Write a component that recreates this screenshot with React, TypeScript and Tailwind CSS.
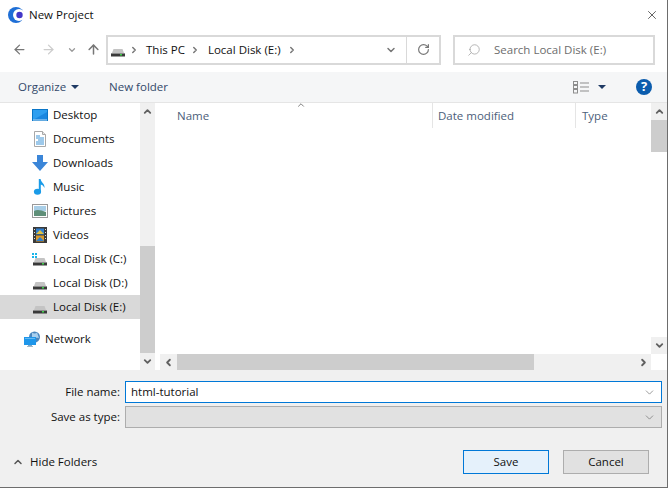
import { ArrowLeft, ArrowRight, ArrowUp, ChevronDown, ChevronLeft, ChevronRight, ChevronUp, RotateCw, Search, X } from "lucide-react";

const font = "font-['Open_Sans','Liberation_Sans',sans-serif]";

function HardDrive({ windows }: { windows?: boolean }) {
  return (
    <svg width="16" height="16" viewBox="0 0 16 16">
      {windows && (
        <g fill="#19b5ea">
          <rect x="0" y="2" width="2" height="2" />
          <rect x="3" y="2" width="2" height="2" />
          <rect x="0" y="5" width="2" height="2" />
          <rect x="3" y="5" width="2" height="2" />
        </g>
      )}
      <path d="M2 11 L3.5 7 H12.5 L14 11 Z" fill="#c4c4c4" />
      <rect x="1" y="11" width="14" height="3.5" fill="#3a3a3a" />
      <rect x="1" y="11" width="14" height="1" fill="#8c8c8c" />
      <rect x="10" y="12" width="2" height="1.5" fill="#3fd04a" />
    </svg>
  );
}

function Desktop() {
  return (
    <svg width="16" height="16" viewBox="0 0 16 16">
      <rect x="0" y="2" width="16" height="12" fill="#0a76c8" />
      <rect x="1" y="3" width="14" height="10" fill="#2f9ff0" />
      <path d="M1 13 L15 5 V13 Z" fill="#1b87e0" />
      <rect x="1" y="12.5" width="14" height="1" fill="#bde0fa" />
    </svg>
  );
}

function Documents() {
  return (
    <svg width="16" height="16" viewBox="0 0 16 16">
      <path d="M2.5 0.5 H10.5 L13.5 3.5 V15.5 H2.5 Z" fill="#fff" stroke="#a8a8a8" />
      <path d="M10.5 0.5 V3.5 H13.5" fill="#e8e8e8" stroke="#a8a8a8" />
      <path d="M4 5 H8 M4 7 H12 M6 9 H12 M4 11 H12 M4 13 H12" stroke="#3d93d6" />
    </svg>
  );
}

function Downloads() {
  return (
    <svg width="16" height="16" viewBox="0 0 16 16">
      <path d="M5 0 H11 V7 H16 L8 16 L0 7 H5 Z" fill="#3b86d8" />
    </svg>
  );
}

function Music() {
  return (
    <svg width="16" height="16" viewBox="0 0 16 16">
      <ellipse cx="5.5" cy="12.8" rx="3.6" ry="3" fill="#1a9be8" />
      <path d="M6.8 13 V0 H8.6 C9 3.5 13 4.5 12.5 9 C11.6 6.8 10.2 5.8 8.8 5.4 V13 Z" fill="#1a9be8" />
    </svg>
  );
}

function Pictures() {
  return (
    <svg width="16" height="16" viewBox="0 0 16 16">
      <rect x="0.5" y="1.5" width="15" height="13" fill="#fff" stroke="#9a9a9a" />
      <rect x="2" y="3" width="12" height="5" fill="#a9cfe8" />
      <path d="M2 8 C5 6 9 7 14 9 V13 H2 Z" fill="#5f8f78" />
    </svg>
  );
}

function Videos() {
  return (
    <svg width="16" height="16" viewBox="0 0 16 16">
      <rect x="1" y="0" width="14" height="16" fill="#3a3a3a" />
      <rect x="4" y="1.5" width="8" height="6" fill="#2f7fd0" />
      <rect x="4" y="8.5" width="8" height="6" fill="#d89a2e" />
      <path d="M4 7 L8 3 L12 7 Z" fill="#e0c040" />
      <path d="M4 14 L8 10 L12 14 Z" fill="#2f7fd0" />
      <g fill="#ddd">
        <rect x="2" y="2" width="1" height="1" />
        <rect x="2" y="5" width="1" height="1" />
        <rect x="2" y="8" width="1" height="1" />
        <rect x="2" y="11" width="1" height="1" />
        <rect x="13" y="2" width="1" height="1" />
        <rect x="13" y="5" width="1" height="1" />
        <rect x="13" y="8" width="1" height="1" />
        <rect x="13" y="11" width="1" height="1" />
      </g>
    </svg>
  );
}

function Network() {
  return (
    <svg width="16" height="16" viewBox="0 0 16 16">
      <circle cx="10.5" cy="6" r="5.5" fill="#4a86bd" />
      <path d="M8 1.5 C10 3 12 2.5 13 1.5 L15 7 C12 6 10 8 8 6 Z" fill="#a9cfee" />
      <rect x="0" y="6" width="12" height="8" fill="#1e96ea" />
      <rect x="1" y="7" width="10" height="1" fill="#63baf5" />
      <rect x="4" y="14" width="4" height="1" fill="#7aa7c8" />
      <rect x="3" y="15" width="6" height="1" fill="#a0b8c8" />
    </svg>
  );
}

function Logo() {
  return (
    <svg width="16" height="16" viewBox="0 0 16 16">
      <circle cx="8" cy="8" r="8" fill="#1f6fd6" />
      <circle cx="11" cy="8" r="6" fill="#fff" />
      <circle cx="11.5" cy="8" r="3.2" fill="#4338c8" />
    </svg>
  );
}

const places = [
  { label: "Desktop", icon: <Desktop /> },
  { label: "Documents", icon: <Documents /> },
  { label: "Downloads", icon: <Downloads /> },
  { label: "Music", icon: <Music /> },
  { label: "Pictures", icon: <Pictures /> },
  { label: "Videos", icon: <Videos /> },
  { label: "Local Disk (C:)", icon: <HardDrive windows /> },
  { label: "Local Disk (D:)", icon: <HardDrive /> },
  { label: "Local Disk (E:)", icon: <HardDrive />, selected: true },
];

export default function App() {
  return (
    <div className={`flex h-[488px] w-[668px] flex-col border-r border-b border-[#6d6d6d] bg-white text-[11.5px] text-[#111] ${font}`}>
      {/* title bar */}
      <div className="flex h-8 shrink-0 items-center pb-[2px] pl-2 pr-2">
        <Logo />
        <span className="ml-[5px] text-[#111]">New Project</span>
        <X className="ml-auto h-[14px] w-[14px] text-[#222]" strokeWidth={1.2} />
      </div>

      {/* navigation */}
      <div className="flex h-10 shrink-0 items-center pb-[5px]">
        <div className="flex w-[106px] items-center pl-[12px] text-[#777]">
          <ArrowLeft className="h-[15px] w-[15px]" strokeWidth={2} />
          <ArrowRight className="ml-[14px] h-[15px] w-[15px] text-[#ccc]" strokeWidth={2} />
          <ChevronDown className="ml-[11px] h-[10px] w-[10px] text-[#999]" strokeWidth={3} />
          <ArrowUp className="ml-[9px] h-[15px] w-[15px]" strokeWidth={2.4} />
        </div>
        <div className="flex h-[30px] w-[335px] items-center border-2 border-[#d9d9d9] pl-[2px]">
          <HardDrive />
          <ChevronRight className="ml-[3px] h-[10px] w-[10px] text-[#777]" strokeWidth={3.5} />
          <span className="ml-[7px]">This PC</span>
          <ChevronRight className="ml-[5px] h-[10px] w-[10px] text-[#777]" strokeWidth={3.5} />
          <span className="ml-[8px]">Local Disk (E:)</span>
          <ChevronRight className="ml-[6px] h-[10px] w-[10px] text-[#777]" strokeWidth={3.5} />
          <ChevronDown className="ml-auto mr-[9px] h-3 w-3 text-[#777]" strokeWidth={3} />
          <div className="flex h-full w-[33px] items-center justify-center border-l border-[#d9d9d9]">
            <RotateCw className="h-[13px] w-[13px] text-[#777]" strokeWidth={2.2} />
          </div>
        </div>
        <div className="ml-3 flex h-[30px] w-[202px] items-center border-2 border-[#d9d9d9] pl-[12px] text-[#6d6d6d]">
          <Search className="h-[14px] w-[14px] -scale-x-100 text-[#999]" strokeWidth={1.2} />
          <span className="ml-[13px]">Search Local Disk (E:)</span>
        </div>
      </div>

      {/* toolbar */}
      <div className="flex h-[31px] shrink-0 items-center border-b border-[#e5e5e5] bg-[#f5f6f7] pl-[18px] pr-[15px] text-[#33496a]">
        <span>Organize</span>
        <span className="ml-[5px] h-0 w-0 border-x-[4px] border-t-[4px] border-x-transparent border-t-[#1f3a64]" />
        <span className="ml-[30px]">New folder</span>
        <svg className="ml-auto" width="17" height="13" viewBox="0 0 17 13" fill="none" stroke="#8d8d8d">
          <rect x="0.5" y="0.5" width="4" height="3" />
          <rect x="0.5" y="4.5" width="4" height="3" />
          <rect x="0.5" y="8.5" width="4" height="3.5" />
          <path d="M7 2 H16 M7 6 H16 M7 10 H16" />
        </svg>
        <span className="ml-[8px] h-0 w-0 border-x-[4px] border-t-[4px] border-x-transparent border-t-[#1f3a64]" />
        <span className="ml-[30px] flex h-4 w-4 items-center justify-center rounded-full bg-[#0b5cad] text-[13px] font-bold text-white">?</span>
      </div>

      {/* panes */}
      <div className="flex min-h-0 flex-1">
        <div className="flex w-[140px] shrink-0 flex-col">
          {places.map((p) => (
            <div key={p.label} className={`flex h-6 shrink-0 items-center pl-8 ${p.selected ? "bg-[#d9d9d9]" : ""}`}>
              {p.icon}
              <span className="ml-[5px]">{p.label}</span>
            </div>
          ))}
          <div className="mt-2 flex h-6 items-center pl-6">
            <Network />
            <span className="ml-[5px]">Network</span>
          </div>
        </div>
        <div className="flex w-[15px] shrink-0 flex-col bg-[#f0f0f0]">
          <div className="flex h-[17px] shrink-0 items-center justify-center text-[#606060]">
            <ChevronUp className="h-[11px] w-[11px]" strokeWidth={4} />
          </div>
          <div className="h-[126px] shrink-0" />
          <div className="h-[107px] shrink-0 bg-[#cdcdcd]" />
          <div className="flex flex-1 items-center justify-center text-[#606060]">
            <ChevronDown className="h-[11px] w-[11px]" strokeWidth={4} />
          </div>
        </div>

        <div className="relative ml-[2px] flex min-w-0 flex-1 flex-col">
          <span className="absolute left-[139px] top-[-3px] text-[#666]">
            <ChevronUp className="h-[10px] w-[10px]" strokeWidth={2} />
          </span>
          <div className="flex min-h-0 flex-1">
            <div className="flex-1">
              <div className="flex h-[27px] items-center pb-[2px] text-[#4c607a]">
                <div className="flex h-full w-[275px] items-center pl-[20px]">Name</div>
                <div className="flex h-full w-[143px] items-center border-l border-[#e5e5e5] pl-[5px]">Date modified</div>
                <div className="flex h-full flex-1 items-center border-l border-[#e5e5e5] pl-[6px]">Type</div>
              </div>
            </div>
            <div className="flex w-4 shrink-0 flex-col bg-[#f0f0f0]">
              <div className="flex h-[17px] shrink-0 items-center justify-center text-[#606060]">
                <ChevronUp className="h-[11px] w-[11px]" strokeWidth={4} />
              </div>
              <div className="h-8 shrink-0 bg-[#cdcdcd]" />
              <div className="flex-1 bg-white" />
              <div className="flex h-[17px] shrink-0 items-center justify-center text-[#606060]">
                <ChevronDown className="h-[11px] w-[11px]" strokeWidth={4} />
              </div>
            </div>
          </div>
          <div className="flex h-4 shrink-0 pl-[3px]">
            <div className="flex flex-1 bg-[#f0f0f0]">
              <div className="flex w-[17px] items-center justify-center text-[#606060]">
                <ChevronLeft className="h-[11px] w-[11px]" strokeWidth={4} />
              </div>
              <div className="w-[357px] bg-[#cdcdcd]" />
              <div className="flex flex-1 items-center justify-end pr-[2px] text-[#606060]">
                <ChevronRight className="h-[11px] w-[11px]" strokeWidth={4} />
              </div>
            </div>
            <div className="w-4 bg-white" />
          </div>
        </div>
      </div>

      {/* footer */}
      <div className="flex h-[117px] shrink-0 flex-col bg-[#f0f0f0] pt-[11px]">
        <div className="flex h-[22px] items-center">
          <span className="w-[120px] text-right">File name:</span>
          <div className="ml-[5px] flex h-[22px] w-[537px] items-center border border-[#0078d7] bg-white pl-[5px] pr-[5px]">
            <span>html-tutorial</span>
            <ChevronDown className="ml-auto h-[13px] w-[13px] text-[#666]" strokeWidth={1.2} />
          </div>
        </div>
        <div className="mt-[3px] flex h-[22px] items-center">
          <span className="w-[120px] text-right">Save as type:</span>
          <div className="ml-[5px] flex h-[22px] w-[537px] items-center border border-[#adadad] bg-[#e1e1e1] pl-[6px] pr-[5px]">
            <ChevronDown className="ml-auto h-[13px] w-[13px] text-[#666]" strokeWidth={1.2} />
          </div>
        </div>
        <div className="mt-[22px] flex items-center pl-[12px] pr-[18px]">
          <ChevronUp className="h-[12px] w-[12px] text-[#555]" strokeWidth={3} />
          <span className="ml-[6px]">Hide Folders</span>
          <button className="ml-auto h-6 w-[86px] border border-[#0078d7] bg-[#e5f1fb]">Save</button>
          <button className="ml-[14px] h-6 w-[86px] border border-[#adadad] bg-[#e1e1e1]">Cancel</button>
        </div>
      </div>
    </div>
  );
}
